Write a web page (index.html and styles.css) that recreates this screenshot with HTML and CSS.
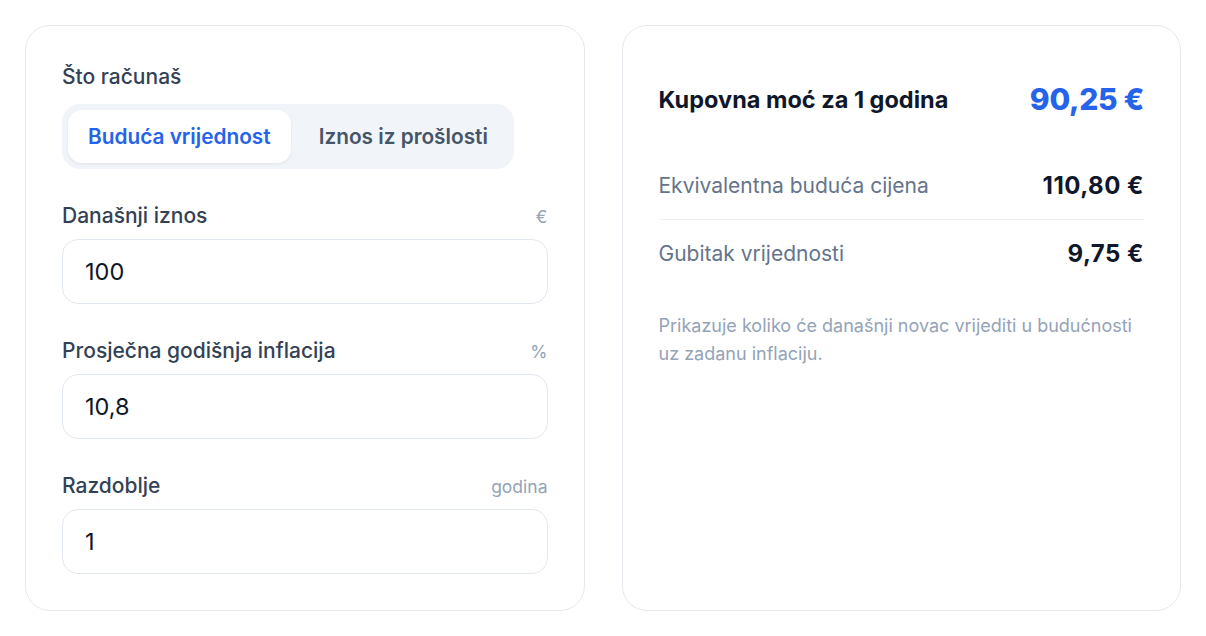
FILE: index.html
```html
<!DOCTYPE html>
<html lang="hr">
<head>
    <meta charset="UTF-8" />
    <title>Kalkulator inflacije</title>
    <link rel="stylesheet" href="styles.css">
</head>
<body>
    <div class="layout">
        <div class="card form-card">
            <div class="mode-label">Što računaš</div>
            <div class="toggle">
                <button class="toggle-btn active">Buduća vrijednost</button>
                <button class="toggle-btn">Iznos iz prošlosti</button>
            </div>

            <div class="field">
                <div class="field-head">
                    <label for="amount">Današnji iznos</label>
                    <span class="unit">€</span>
                </div>
                <input type="text" id="amount" value="100">
            </div>

            <div class="field">
                <div class="field-head">
                    <label for="rate">Prosječna godišnja inflacija</label>
                    <span class="unit">%</span>
                </div>
                <input type="text" id="rate" value="10,8">
            </div>

            <div class="field">
                <div class="field-head">
                    <label for="years">Razdoblje</label>
                    <span class="unit">godina</span>
                </div>
                <input type="text" id="years" value="1">
            </div>
        </div>

        <div class="card result-card">
            <div class="result-head">
                <span class="result-title">Kupovna moć za 1 godina</span>
                <span class="result-main">90,25 €</span>
            </div>
            <div class="result-row divided">
                <span class="row-label">Ekvivalentna buduća cijena</span>
                <span class="row-value">110,80 €</span>
            </div>
            <div class="result-row">
                <span class="row-label">Gubitak vrijednosti</span>
                <span class="row-value">9,75 €</span>
            </div>
            <p class="note">Prikazuje koliko će današnji novac vrijediti u budućnosti uz zadanu inflaciju.</p>
        </div>
    </div>
</body>
</html>
```

FILE: styles.css
```css
* { box-sizing: border-box; }
body {
    margin: 0;
    background: #ffffff;
    font-family: 'Inter', 'Noto Sans', sans-serif;
    color: #0f172a;
}
.layout {
    display: grid;
    grid-template-columns: 1fr 1fr;
    gap: 37px;
    padding: 25px;
}
.card {
    border: 1px solid #e5e8ec;
    border-radius: 25px;
    padding: 37px 36px 36px;
    min-height: 586px;
}
.mode-label {
    font-size: 21px;
    line-height: 28px;
    font-weight: 500;
    color: #334155;
}
.toggle {
    display: inline-flex;
    gap: 8px;
    margin-top: 13px;
    padding: 6px;
    background: #f1f5f9;
    border-radius: 18px;
}
.toggle-btn {
    border: none;
    background: transparent;
    font-family: inherit;
    font-size: 20.8px;
    font-weight: 600;
    color: #475569;
    height: 53px;
    padding: 0 20px;
    border-radius: 14px;
    cursor: pointer;
}
.toggle-btn.active {
    background: #ffffff;
    color: #2563eb;
    box-shadow: 0 1px 3px rgba(15, 23, 42, 0.08);
}
.field { margin-top: 33px; }
.field-head {
    display: flex;
    justify-content: space-between;
    align-items: baseline;
    margin-bottom: 8px;
    line-height: 28px;
}
.field-head label {
    font-size: 21px;
    font-weight: 500;
    color: #334155;
}
.unit {
    font-size: 17.5px;
    color: #94a3b8;
}
.field input {
    display: block;
    width: 100%;
    height: 65px;
    padding: 0 22px;
    border: 1px solid #e2e8f0;
    border-radius: 16px;
    font-family: inherit;
    font-size: 23.5px;
    color: #0f172a;
    background: #fff;
    outline: none;
}
.result-head {
    display: flex;
    justify-content: space-between;
    align-items: center;
    padding: 18px 0;
    margin-bottom: 17px;
}
.result-title {
    font-size: 23.5px;
    font-weight: 700;
    color: #0f172a;
}
.result-main {
    font-size: 30px;
    line-height: 36px;
    font-weight: 800;
    letter-spacing: -0.3px;
    color: #2563eb;
}
.result-row {
    display: flex;
    justify-content: space-between;
    align-items: center;
    padding: 20px 0 19px;
    line-height: 28px;
}
.result-row.divided {
    border-bottom: 1px solid #eef1f5;
}
.row-label {
    font-size: 21px;
    color: #64748b;
}
.row-value {
    font-size: 24px;
    font-weight: 700;
    letter-spacing: 0.5px;
    color: #0f172a;
}
.note {
    margin: 25px 0 0;
    max-width: 480px;
    font-size: 18px;
    line-height: 28px;
    color: #94a3b8;
}
```
